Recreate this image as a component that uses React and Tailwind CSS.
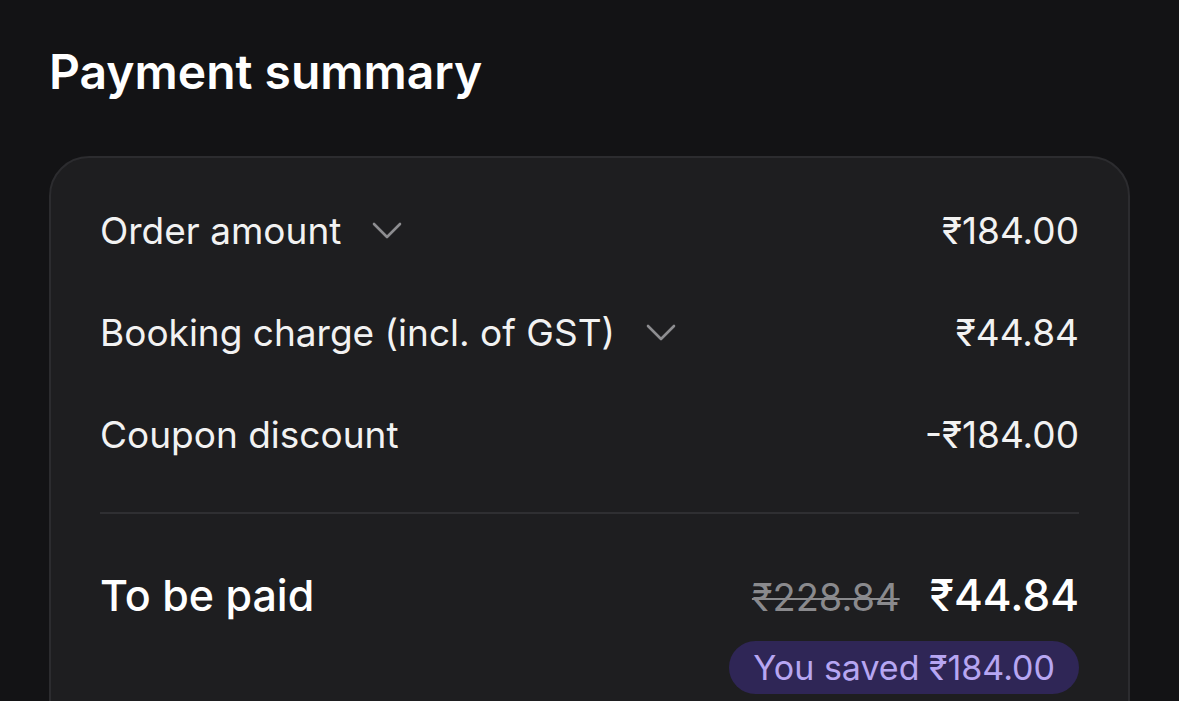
const rows = [
  { label: 'Order amount', value: '₹184.00', expandable: true },
  { label: 'Booking charge (incl. of GST)', value: '₹44.84', expandable: true },
  { label: 'Coupon discount', value: '-₹184.00', expandable: false },
];

function Chevron() {
  return (
    <svg width="30" height="18" viewBox="0 0 30 18" fill="none" className="text-[#8d8d90]">
      <polyline points="2,2 15,15 28,2" stroke="currentColor" strokeWidth="2.6" strokeLinecap="round" strokeLinejoin="round" />
    </svg>
  );
}

export default function App() {
  return (
    <div
      className="h-[701px] w-full overflow-hidden bg-[#131315] text-white"
      style={{ fontFamily: 'Inter, "Noto Sans", sans-serif' }}
    >
      <div className="px-[49px] pt-[40px]">
        <h1 className="text-[48px] font-semibold leading-[64px]">Payment summary</h1>

        {/* Summary card */}
        <div className="mt-[52px] rounded-[40px] border-2 border-[#2c2c2f] bg-[#1e1e20] px-[49px] pt-[50px] pb-[60px]">
          <div className="flex flex-col gap-[56px]">
            {rows.map((row) => (
              <div key={row.label} className="flex h-[46px] items-center justify-between">
                <div className="flex items-center gap-[31px]">
                  <span className="text-[37px] font-normal text-[#f2f2f2]">{row.label}</span>
                  {row.expandable && <Chevron />}
                </div>
                <span className="text-[37px] text-[#f2f2f2]">{row.value}</span>
              </div>
            ))}
          </div>

          <div className="mt-[54px] h-[2px] bg-[#2f2f32]" />

          <div className="mt-[54px] flex items-start justify-between">
            <span className="text-[43px] font-medium leading-[54px]">To be paid</span>
            <div className="flex flex-col items-end">
              <div className="flex items-baseline gap-[30px] leading-[54px]">
                <span className="text-[38px] text-[#8a8a8d] line-through decoration-2">₹228.84</span>
                <span className="text-[44px] font-medium">₹44.84</span>
              </div>
              <span className="mt-[17px] rounded-full bg-[#2f2656] px-[24px] py-[6px] text-[34px] leading-[41px] text-[#b7a6f2]">
                You saved ₹184.00
              </span>
            </div>
          </div>
        </div>
      </div>
    </div>
  );
}
